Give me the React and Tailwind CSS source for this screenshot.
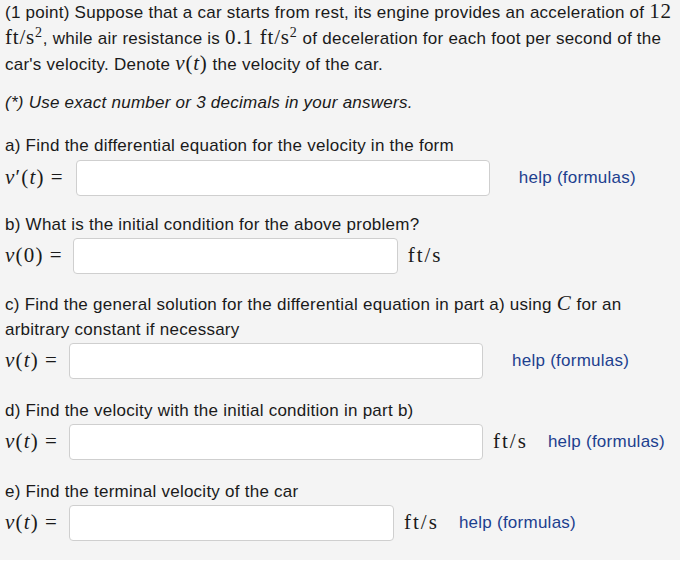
const M = ({ children, className = '' }) => (
    <span className={`font-['Liberation_Serif',serif] text-[21px] tracking-[0.8px] ${className}`}>{children}</span>
);

const I = ({ children }) => <i className="italic">{children}</i>;

const Sup = () => <sup className="text-[14px] leading-none">2</sup>;

const Label = ({ children }) => (
    <span className="font-['Liberation_Serif',serif] text-[21px] tracking-[1.2px] whitespace-nowrap">{children}</span>
);

const Eq = () => <span className="ml-[6px]">=</span>;

const Field = ({ width }) => (
    <div className={`h-9 ${width} bg-white border border-[#cfcfcf] rounded-[4px]`} />
);

const Help = () => (
    <span className="text-[#1d3f8f] whitespace-nowrap">help (formulas)</span>
);

const Unit = () => (
    <span className="font-['Liberation_Serif',serif] text-[21px] tracking-[2px] whitespace-nowrap">ft/s</span>
);

const vt = (
    <>
        <I>v</I>(<I>t</I>)<Eq />
    </>
);

export default function App() {
    return (
        <div className="min-h-[561px] bg-[#f4f4f4] text-[#1a1a1a] text-[17px] tracking-[0.25px] font-['Liberation_Sans',Arial,sans-serif] px-[5px] pt-0">
            <p className="leading-[25px] -mt-px">
                (1 point) Suppose that a car starts from rest, its engine provides an acceleration of <M>12</M>{' '}
                <M>ft/s<Sup /></M>, while air resistance is <M>0.1 ft/s<Sup /></M> of
                deceleration for each foot per second of the car's velocity. Denote <M><I>v</I>(<I>t</I>)</M> the velocity of the car.
            </p>

            <p className="italic leading-[25px] mt-[13px]">(*) Use exact number or 3 decimals in your answers.</p>

            <p className="leading-[25px] mt-[18px]">a) Find the differential equation for the velocity in the form</p>
            <div className="flex items-center mt-[2px]">
                <Label><I>v</I>′(<I>t</I>)<Eq /></Label>
                <div className="ml-[12px]"><Field width="w-[414px]" /></div>
                <span className="ml-[29px]"><Help /></span>
            </div>

            <p className="leading-[25px] mt-[16px]">b) What is the initial condition for the above problem?</p>
            <div className="flex items-center mt-px">
                <Label><I>v</I>(0)<Eq /></Label>
                <div className="ml-[10px]"><Field width="w-[325px]" /></div>
                <span className="ml-[10px]"><Unit /></span>
            </div>

            <p className="leading-[25px] mt-[17px]">
                c) Find the general solution for the differential equation in part a) using <M><I>C</I></M> for an
                arbitrary constant if necessary
            </p>
            <div className="flex items-center mt-px">
                <Label>{vt}</Label>
                <div className="ml-[11px]"><Field width="w-[414px]" /></div>
                <span className="ml-[29px]"><Help /></span>
            </div>

            <p className="leading-[25px] mt-[19px]">d) Find the velocity with the initial condition in part b)</p>
            <div className="flex items-center mt-px">
                <Label>{vt}</Label>
                <div className="ml-[11px]"><Field width="w-[414px]" /></div>
                <span className="ml-[10px]"><Unit /></span>
                <span className="ml-[20px]"><Help /></span>
            </div>

            <p className="leading-[25px] mt-[19px]">e) Find the terminal velocity of the car</p>
            <div className="flex items-center mt-px">
                <Label>{vt}</Label>
                <div className="ml-[11px]"><Field width="w-[325px]" /></div>
                <span className="ml-[10px]"><Unit /></span>
                <span className="ml-[20px]"><Help /></span>
            </div>
        </div>
    );
}
